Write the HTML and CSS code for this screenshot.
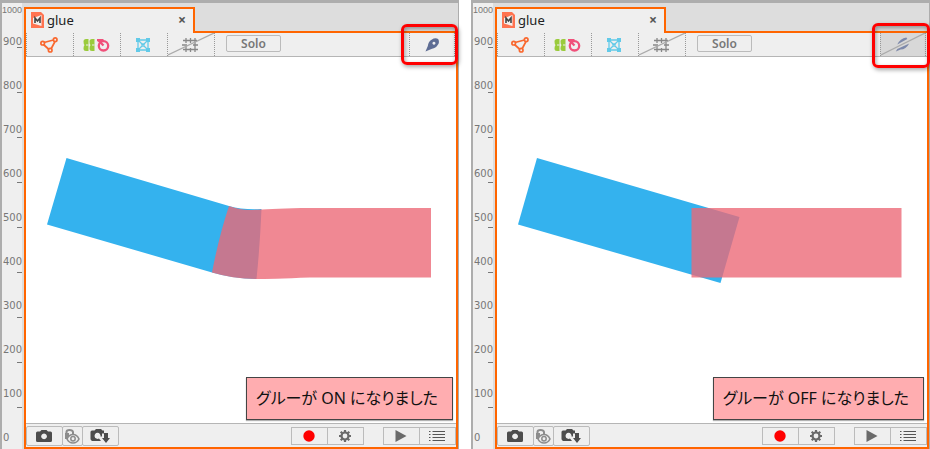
FILE: index.html
```html
<!DOCTYPE html>
<html lang="ja">
<head>
<meta charset="utf-8">
<title>glue</title>
<link rel="stylesheet" href="styles.css">
</head>
<body>
<svg class="sprite" aria-hidden="true">
  <symbol id="i-doc" viewBox="0 0 13 16"><path d="M0 0h10l3 3v13H0z" fill="#ff7350"/><path d="M10.500 3L2 6v5.500l8.500 2.500z" fill="#f3efed"/><path d="M4 11V6l2.500 3L9 6v5" fill="none" stroke="#444" stroke-width="1.600"/></symbol>
  <symbol id="i-vertex" viewBox="0 0 18 16"><g fill="none" stroke="#f9682f" stroke-width="1.700"><path d="M4 5.500l9.500-2.500M3.500 7.500l5.500 5M15 4.500L11 12"/><circle cx="2.700" cy="6.200" r="1.800"/><circle cx="15.200" cy="2.700" r="1.800"/><circle cx="10.200" cy="13.200" r="1.800"/></g></symbol>
  <symbol id="i-deform" viewBox="0 0 28 16"><path d="M4 2h2.500v12H4Q1.500 14 1.500 11.500T2.500 8Q1.500 7 1.500 4.500T4 2zM10 2h2.500v12H10Q7.500 14 7.500 11.500T8.500 8Q7.500 7 7.500 4.500T10 2z" fill="#9acb3c"/><path d="M4 8h2.500M10 8h2.500" stroke="#efefef"/><g fill="none" stroke="#f0507a" stroke-width="2.300"><circle cx="21.500" cy="8.800" r="4.700"/><path d="M15 3.200h6.500M16.500 3.500l5 5"/></g></symbol>
  <symbol id="i-mesh" viewBox="0 0 16 16"><g fill="none" stroke="#62cae8" stroke-width="1.300"><path d="M3 3h10v10H3zM3 3l10 10M13 3L3 13"/></g><g fill="#62cae8"><path d="M1 1h4v4H1zM11 1h4v4h-4zM1 11h4v4H1zM11 11h4v4h-4z"/><path d="M6 6h4v4H6z" opacity=".6"/></g></symbol>
  <symbol id="i-grid" viewBox="0 0 18 16"><path d="M2 3.500h14M1 8h5M12 8h5M2 12.500h15M5 1v5M5 9v6M9.500 1v5M9.500 11v4M14 1v14" fill="none" stroke="#888" stroke-width="1.300"/></symbol>
  <symbol id="i-nib" viewBox="0 0 16 16"><path fill-rule="evenodd" d="M.5 15.500L3 9.500Q3.500 5 7 3 10.500.5 14 2 16 5.500 13.500 8.500 11.500 12 7.500 12.500zM9.500 5a1.600 1.600 0 1 0 .1 0z" fill="#5e6d94"/></symbol>
  <symbol id="i-camera" viewBox="0 0 18 14"><path fill-rule="evenodd" d="M2.500 2.500H5L6.500 1h5L13 2.500h2.500q1.500 0 1.500 1.500v7.500q0 1.500-1.500 1.500h-13Q1 13 1 11.500V4q0-1.500 1.500-1.500zM9 4.500a2.900 2.900 0 1 0 .1 0z" fill="#4d4d4d"/></symbol>
  <symbol id="i-camera-down" viewBox="0 0 20 16"><path fill-rule="evenodd" d="M2 2.500h2.500L6 1h5l1.500 1.500H14v3h-2v3h-1.500a3 3 0 1 0-1.500 2l2 2.500H2Q.5 12 .5 11V4Q.5 2.500 2 2.500z" fill="#4d4d4d"/><path d="M14 5h4v5h2l-4 5-4-5h2z" fill="#4d4d4d"/></symbol>
  <symbol id="i-lock-eye" viewBox="0 0 16 16"><path d="M2.500 7V4Q2.500 2 5.500 2T9 4v2" fill="none" stroke="#8c8c8c" stroke-width="2"/><path d="M1 5h4v6H1z" fill="#8c8c8c"/><path d="M3 11q2-4.500 6-4.500t6 4.500q-2 4-6 4t-6-4z" fill="#efefef" stroke="#8c8c8c" stroke-width="1.600"/><circle cx="9" cy="10.800" r="2.200" fill="none" stroke="#8c8c8c" stroke-width="1.500"/></symbol>
  <symbol id="i-record" viewBox="0 0 14 14"><circle cx="7" cy="7" r="5.700" fill="#f00"/></symbol>
  <symbol id="i-gear" viewBox="0 0 14 14"><circle cx="7" cy="7" r="3.500" fill="none" stroke="#6a6a6a" stroke-width="2.200"/><path d="M7 1v2M7 11v2M1 7h2M11 7h2M2.700 2.700l1.600 1.600M9.700 9.700l1.600 1.600M11.300 2.700L9.700 4.300M4.300 9.700l-1.600 1.600" stroke="#6a6a6a" stroke-width="2.200"/></symbol>
  <symbol id="i-play" viewBox="0 0 14 14"><path d="M1.500 1l11 6-11 6z" fill="#6a6a6a"/></symbol>
  <symbol id="i-list" viewBox="0 0 18 12"><path d="M1 1.500h1.500M1 4.500h1.500M1 7.500h1.500M1 10.500h1.500M4.500 1.500H17M4.500 4.500H17M4.500 7.500H17M4.500 10.500H17" stroke="#555" stroke-width="1.100"/></symbol>
  <symbol id="i-slash" viewBox="0 0 47 23" preserveAspectRatio="none"><path d="M0 22L47 0" stroke="#aaa" stroke-width="1.200"/></symbol>
</svg>

<section class="panel">
  <ol class="ruler"><li class="wide">1000</li><li>900</li><li>800</li><li>700</li><li>600</li><li>500</li><li>400</li><li>300</li><li>200</li><li>100</li><li class="zero">0</li></ol>
  <div class="editor">
    <div class="tab"><svg class="doc"><use href="#i-doc"/></svg><span class="title">glue</span><button class="close" aria-label="閉じる">×</button></div>
    <div class="frame">
      <div class="toolbar">
        <button class="tool" aria-label="頂点"><svg class="ico"><use href="#i-vertex"/></svg></button>
        <button class="tool" aria-label="デフォーマ"><svg class="pair"><use href="#i-deform"/></svg></button>
        <button class="tool" aria-label="メッシュ"><svg class="ico"><use href="#i-mesh"/></svg></button>
        <button class="tool" aria-label="グリッド"><svg class="ico"><use href="#i-grid"/></svg><svg class="slash"><use href="#i-slash"/></svg></button>
        <div class="solo-cell"><button class="solo">Solo</button></div>
        <div class="glue-cell"><button class="glue" aria-label="グルー" aria-pressed="true"><svg class="nib"><use href="#i-nib"/></svg></button><span class="mark"></span></div>
      </div>
      <div class="canvas">
        <svg class="art" viewBox="26 57 430 366">
          <path fill="#34b2ee" d="M66.500 158L229 206Q243 210 261.500 209Q260 245 256.500 279Q234 279 212 272.500L47 224.500z"/>
          <path fill="#ec6876" fill-opacity=".79" d="M229 206Q240 210 250 210Q262 209.500 301 208H431V277.500H310Q270 279 256 279Q232 278.500 212 272.500Q219 236 229 206z"/>
        </svg>
        <p class="message">グルーが ON になりました</p>
      </div>
      <div class="footer">
        <div class="group shots"><button class="btn" aria-label="撮影"><svg class="cam"><use href="#i-camera"/></svg></button><button class="btn slim" aria-label="ロック"><svg class="ico"><use href="#i-lock-eye"/></svg></button><button class="btn" aria-label="保存"><svg class="camdown"><use href="#i-camera-down"/></svg></button></div>
        <div class="group rec"><button class="btn" aria-label="録画"><svg class="small"><use href="#i-record"/></svg></button><button class="btn" aria-label="設定"><svg class="small"><use href="#i-gear"/></svg></button></div>
        <div class="group play"><button class="btn" aria-label="再生"><svg class="small"><use href="#i-play"/></svg></button><button class="btn" aria-label="一覧"><svg class="list"><use href="#i-list"/></svg></button></div>
      </div>
    </div>
  </div>
</section>

<section class="panel">
  <ol class="ruler"><li class="wide">1000</li><li>900</li><li>800</li><li>700</li><li>600</li><li>500</li><li>400</li><li>300</li><li>200</li><li>100</li><li class="zero">0</li></ol>
  <div class="editor">
    <div class="tab"><svg class="doc"><use href="#i-doc"/></svg><span class="title">glue</span><button class="close" aria-label="閉じる">×</button></div>
    <div class="frame">
      <div class="toolbar">
        <button class="tool" aria-label="頂点"><svg class="ico"><use href="#i-vertex"/></svg></button>
        <button class="tool" aria-label="デフォーマ"><svg class="pair"><use href="#i-deform"/></svg></button>
        <button class="tool" aria-label="メッシュ"><svg class="ico"><use href="#i-mesh"/></svg></button>
        <button class="tool" aria-label="グリッド"><svg class="ico"><use href="#i-grid"/></svg><svg class="slash"><use href="#i-slash"/></svg></button>
        <div class="solo-cell"><button class="solo">Solo</button></div>
        <div class="glue-cell"><button class="glue off" aria-label="グルー" aria-pressed="false"><svg class="off-art" viewBox="0 0 46 23" preserveAspectRatio="none"><path d="M17 11.500Q20 5.500 26.500 4.500L27.500 6zM15.500 18.500L17 16 29.500 10.500Q26 16.500 20.500 16.500z" fill="#7d89aa"/><path d="M0 22L46 0" stroke="#aaa" stroke-width="1.200"/></svg></button><span class="mark tall"></span></div>
      </div>
      <div class="canvas">
        <svg class="art" viewBox="26 57 430 366">
          <path fill="#34b2ee" d="M66 158L268.500 217L249.500 283L47 224.500z"/>
          <path fill="#ec6876" fill-opacity=".79" d="M220.500 208H430.500V277.500H220.500z"/>
        </svg>
        <p class="message">グルーが OFF になりました</p>
      </div>
      <div class="footer">
        <div class="group shots"><button class="btn" aria-label="撮影"><svg class="cam"><use href="#i-camera"/></svg></button><button class="btn slim" aria-label="ロック"><svg class="ico"><use href="#i-lock-eye"/></svg></button><button class="btn" aria-label="保存"><svg class="camdown"><use href="#i-camera-down"/></svg></button></div>
        <div class="group rec"><button class="btn" aria-label="録画"><svg class="small"><use href="#i-record"/></svg></button><button class="btn" aria-label="設定"><svg class="small"><use href="#i-gear"/></svg></button></div>
        <div class="group play"><button class="btn" aria-label="再生"><svg class="small"><use href="#i-play"/></svg></button><button class="btn" aria-label="一覧"><svg class="list"><use href="#i-list"/></svg></button></div>
      </div>
    </div>
  </div>
</section>
</body>
</html>
```
FILE: styles.css
```css
* { box-sizing: border-box; }

body {
  margin: 0;
  display: flex;
  gap: 12px;
  height: 100vh;
  overflow: hidden;
  background: #fff;
  font-family: "Noto Sans", "Noto Sans CJK JP", sans-serif;
}

button {
  margin: 0;
  padding: 0;
  border: 0;
  background: none;
  font: inherit;
}

.sprite { position: absolute; width: 0; height: 0; }

.panel {
  flex: 1;
  min-width: 0;
  display: flex;
  gap: 2px;
  border: 0 solid #adadad;
  border-width: 3px 1px 0 2px;
  background: #ddd;
}

/* Vertical ruler */
.ruler {
  flex: none;
  width: 20px;
  margin: 0;
  padding: 0;
  list-style: none;
  overflow: hidden;
  background: repeating-linear-gradient(transparent 0 44px, #777 44px 45px) right top / 5px 100% no-repeat #efefef;
  color: #777;
  font: 10px/44px "DejaVu Sans", sans-serif;
  text-align: right;
}
.ruler li { height: 44px; }
.ruler .wide {
  height: 17px;
  font: 9px/14px "Liberation Sans", sans-serif;
}
.ruler .zero { text-align: left; padding-left: 1px; }

/* Document window */
.editor {
  flex: 1;
  min-width: 0;
  display: flex;
  flex-direction: column;
  padding-top: 4px;
}
.tab {
  position: relative;
  z-index: 1;
  flex: none;
  display: flex;
  align-items: center;
  width: 171px;
  height: 26px;
  margin-bottom: -2px;
  padding: 0 5px 2px;
  border: 2px solid #ff6500;
  border-bottom: 0;
  background: #efefef;
}
.doc { width: 13px; height: 16px; }
.title { margin-left: 3px; font-size: 13px; line-height: 18px; color: #222; }
.close {
  width: 12px;
  margin-left: auto;
  color: #555;
  font-size: 14px;
  font-weight: 700;
  line-height: 16px;
}
.frame {
  flex: 1;
  min-height: 0;
  display: flex;
  flex-direction: column;
  border: 2px solid #ff6500;
  background: #efefef;
}

/* Toolbar */
.toolbar {
  flex: none;
  display: flex;
  height: 24px;
  border-bottom: 1px solid #b5b5b5;
}
.tool {
  position: relative;
  display: flex;
  align-items: center;
  justify-content: center;
  width: 47px;
  padding-right: 2px;
  border-left: 1px dotted #999;
}
.ico { width: 18px; height: 16px; }
.pair { width: 28px; height: 16px; }
.slash { position: absolute; inset: 0; width: 100%; height: 100%; }
.solo-cell { padding: 2px 0 4px 11px; border-left: 1px dotted #999; }
.solo {
  display: block;
  width: 55px;
  height: 17px;
  border: 1px solid #bbb;
  border-radius: 2px;
  color: #777;
  font-size: 12px;
  font-weight: 600;
  line-height: 15px;
}
.glue-cell { position: relative; width: 46px; margin: 0 1px 0 auto; }
.glue {
  display: flex;
  align-items: center;
  justify-content: center;
  width: 100%;
  height: 23px;
  border: 0 dotted #999;
  border-width: 0 1px;
}
.glue.off { background: #d8d8d8; }
.nib { width: 15px; height: 15px; }
.off-art { width: 100%; height: 100%; }
.mark {
  position: absolute;
  z-index: 2;
  left: -8px;
  top: -9px;
  width: 57px;
  height: 41px;
  border: 3px solid #f00;
  border-radius: 6px;
  box-shadow: 1px 2px 4px rgba(0, 0, 0, .35), inset 1px 2px 4px rgba(0, 0, 0, .35);
  pointer-events: none;
}
.mark.tall { top: -10px; width: 58px; height: 45px; }

/* Canvas */
.canvas {
  position: relative;
  flex: 1;
  min-height: 0;
  background: #fff;
}
.art { display: block; width: 100%; height: 100%; }
.message {
  position: absolute;
  right: 3px;
  bottom: 3px;
  margin: 0;
  padding: 0 14px 0 9px;
  border: 1px solid #444;
  background: #ffadb0;
  box-shadow: 0 1px 1px rgba(0, 0, 0, .3);
  color: #111;
  font-size: 16px;
  line-height: 41px;
  font-feature-settings: "palt";
  white-space: nowrap;
}

/* Bottom bar */
.footer {
  flex: none;
  display: flex;
  align-items: center;
  height: 24px;
  border-top: 1px solid #b5b5b5;
}
.group { display: flex; }
.btn {
  display: flex;
  align-items: center;
  justify-content: center;
  width: 37px;
  height: 18px;
  margin-right: -1px;
  padding-right: 1px;
  border: 1px solid #bbb;
}
.shots .btn { height: 20px; border-radius: 2px; }
.shots .slim { width: 21px; }
.rec { margin-left: auto; }
.play { margin-left: 20px; }
.play .btn:last-child { margin-right: 0; }
.cam { width: 18px; height: 14px; }
.camdown { width: 20px; height: 16px; }
.small { width: 14px; height: 14px; }
.list { width: 18px; height: 12px; }
```
